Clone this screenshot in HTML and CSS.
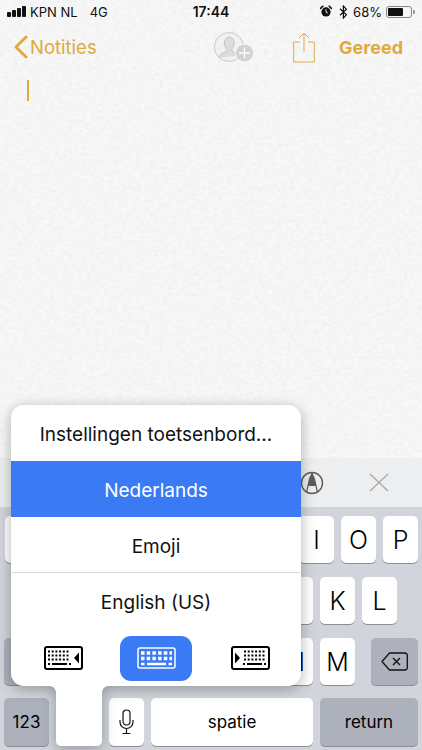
FILE: index.html
```html
<!DOCTYPE html>
<html lang="nl">
<head>
<meta charset="UTF-8" />
<meta name="viewport" content="width=device-width, initial-scale=1" />
<title>Notities</title>
<link rel="stylesheet" href="styles.css">
</head>
<body>

<div class="phone">
  <!-- paper texture behind the note -->
  <svg class="paper" width="422" height="460" aria-hidden="true">
    <filter id="grain" x="0" y="0" width="100%" height="100%">
      <feTurbulence type="fractalNoise" baseFrequency="0.22 0.3" numOctaves="3" seed="4" />
      <feColorMatrix type="matrix" values="0 0 0 0 0.45  0 0 0 0 0.45  0 0 0 0 0.45  0.14 0.14 0 0 -0.1" />
    </filter>
    <rect width="422" height="460" fill="#f8f8f8" />
    <rect width="422" height="460" filter="url(#grain)" />
  </svg>

  <!-- Status bar -->
  <div class="status">
    <div class="status-left">
      <span class="signal"><i></i><i></i><i></i><i></i></span>
      <span>KPN NL</span>
      <span class="net">4G</span>
    </div>
    <div class="status-time">17:44</div>
    <div class="status-right">
      <svg width="12" height="13" viewBox="0 0 13 13">
        <circle cx="6.5" cy="7" r="5" fill="#111" />
        <path d="M6.5 4v3.2l2 1" fill="none" stroke="#f7f7f5" stroke-width="1" />
        <path d="M0.6 3.2 3 0.8M12.4 3.2 10 0.8" stroke="#111" stroke-width="1.8" stroke-linecap="round" />
      </svg>
      <svg class="bt" width="9" height="14" viewBox="0 0 9 14">
        <path d="M1 3.8 7.4 9.8 4.4 13V1l3 3.2L1 10.2" fill="none" stroke="#111" stroke-width="1.2" />
      </svg>
      <span class="pct">68%</span>
      <span class="battery"><span class="battery-fill"></span></span>
      <span class="battery-cap"></span>
    </div>
  </div>

  <!-- Nav bar -->
  <div class="nav">
    <div class="nav-back">
      <svg width="15" height="24" viewBox="0 0 15 24">
        <path d="M13 2 3 12l10 10" fill="none" stroke="#e0aa3c" stroke-width="3" stroke-linecap="round" stroke-linejoin="round" />
      </svg>
      <span>Notities</span>
    </div>
    <div class="nav-tools">
      <svg class="person" width="40" height="32" viewBox="0 0 40 32">
        <circle cx="15" cy="16" r="14.5" fill="#f1f1f0" stroke="#c8c8c8" stroke-width="1" />
        <path d="M5 27c1-5 5-5 7-6.500 1-1 .6-2.500 0-3.500-1.500-2-1.700-4-1.500-6 .4-3 2.500-5 4.800-5s4.400 2 4.800 5c.2 2 0 4-1.600 6-.6 1-1 2.500 0 3.500 2 1.500 4 1.500 6 4" fill="#dcdcdc" stroke="#c4c4c4" stroke-width="1" />
        <circle cx="30.500" cy="22" r="9" fill="#d2d2d2" stroke="#f4f4f2" stroke-width="1" />
        <path d="M30.500 16.500v11M25 22h11" stroke="#fff" stroke-width="1.300" />
      </svg>
      <svg class="share" width="22" height="31" viewBox="0 0 22 31">
        <path d="M7 10H.7v20h20.600V10H15" fill="none" stroke="#dfa951" stroke-width="1" />
        <path d="M11 20V1M6 6l5-5 5 5" fill="none" stroke="#dfa951" stroke-width="1" />
      </svg>
    </div>
    <div class="nav-done">Gereed</div>
  </div>

  <div class="note"><span class="caret"></span></div>

  <!-- Toolbar above keyboard -->
  <div class="toolbar">
    <svg width="24" height="24" viewBox="0 0 24 24">
      <circle cx="12" cy="12" r="10.500" fill="none" stroke="#5c5c5c" stroke-width="1.400" />
      <path d="M6.500 21.500 9.500 8 12 2.500 14.500 8l3 13.500" fill="none" stroke="#5c5c5c" stroke-width="1.200" />
      <path d="M9.500 8 12 2.500 14.500 8l1.500 7H8z" fill="#5c5c5c" />
    </svg>
    <svg class="close" width="20" height="19" viewBox="0 0 20 19">
      <path d="M1 1l18 17M19 1 1 18" stroke="#a9a9a9" stroke-width="1.300" />
    </svg>
  </div>

  <!-- Keyboard, the keys under the popup stay blank -->
  <div class="keyboard">
    <div class="row row-top">
      <span class="key"></span><span class="key"></span><span class="key"></span><span class="key"></span><span class="key"></span><span class="key"></span><span class="key"></span><span class="key">I</span><span class="key">O</span><span class="key">P</span>
    </div>
    <div class="row row-mid">
      <span class="key"></span><span class="key"></span><span class="key"></span><span class="key"></span><span class="key"></span><span class="key"></span><span class="key"></span><span class="key">K</span><span class="key">L</span>
    </div>
    <div class="row">
      <span class="key key-dark key-shift"></span>
      <span class="letters">
        <span class="key"></span><span class="key"></span><span class="key"></span><span class="key"></span><span class="key"></span><span class="key">N</span><span class="key">M</span>
      </span>
      <span class="key key-dark key-del">
        <svg width="27" height="19" viewBox="0 0 27 19">
          <path d="M8.500 1h15.500a2.300 2.300 0 0 1 2.300 2.300v12.400a2.300 2.300 0 0 1-2.300 2.300H8.500L1 9.500z" fill="none" stroke="#111" stroke-width="1.300" stroke-linejoin="round" />
          <path d="M12 6l7 7M19 6l-7 7" stroke="#111" stroke-width="1.400" />
        </svg>
      </span>
    </div>
    <div class="row row-last">
      <span class="key key-dark key-num">123</span>
      <span class="key key-globe"></span>
      <span class="key key-mic">
        <svg width="15" height="26" viewBox="0 0 15 26">
          <rect x="4" y="1" width="7" height="15" rx="3.500" fill="none" stroke="#111" stroke-width="1.200" />
          <path d="M1 11v2a6.500 6.500 0 0 0 13 0v-2M7.500 19.500V24M3.500 24.500h8" fill="none" stroke="#111" stroke-width="1.200" />
        </svg>
      </span>
      <span class="key key-space">spatie</span>
      <span class="key key-dark key-return">return</span>
    </div>
  </div>

  <!-- Language popup, over the keyboard -->
  <div class="popup">
    <div class="popup-item">Instellingen toetsenbord...</div>
    <div class="popup-item popup-active">Nederlands</div>
    <div class="popup-item popup-emoji">Emoji</div>
    <div class="popup-item popup-last">English (US)</div>
    <div class="popup-modes">
      <svg width="39" height="24" viewBox="0 0 39 24">
        <rect x="1" y="1" width="37" height="22" rx="2" fill="none" stroke="#000" stroke-width="2" />
        <path d="M4 5.500h22M4 9.500h22M4 13.500h22" stroke="#000" stroke-width="2" stroke-dasharray="2 1.700" />
        <path d="M8 18h15M4 18h2M25 18h2" stroke="#000" stroke-width="2" />
        <path d="M35 6.500v11l-5-5.500z" fill="#000" />
      </svg>
      <span class="mode-on">
        <svg width="39" height="22" viewBox="0 0 39 22">
          <rect x="1" y="1" width="37" height="20" rx="2" fill="none" stroke="#fff" stroke-width="1.500" />
          <path d="M4 6h31M4 11.500h31" stroke="#fff" stroke-width="3.500" stroke-dasharray="3.500 2.200" />
          <path d="M10 17h19M4 17h3.500M31.500 17H35" stroke="#fff" stroke-width="2.500" />
        </svg>
      </span>
      <svg width="39" height="24" viewBox="0 0 39 24">
        <rect x="1" y="1" width="37" height="22" rx="2" fill="none" stroke="#000" stroke-width="2" />
        <path d="M13 5.500h22M13 9.500h22M13 13.500h22" stroke="#000" stroke-width="2" stroke-dasharray="2 1.700" />
        <path d="M16 18h15M12 18h2M33 18h2" stroke="#000" stroke-width="2" />
        <path d="M4 6.500v11l5-5.500z" fill="#000" />
      </svg>
    </div>
    <div class="popup-tail"></div>
  </div>
</div>

</body>
</html>
```

FILE: styles.css
```css
* {
  box-sizing: border-box;
}

body {
  margin: 0;
  background: #d1d5db;
  font-family: Inter, "Liberation Sans", sans-serif;
  color: #111;
}

.phone {
  position: relative;
  width: 422px;
  height: 750px;
  overflow: hidden;
  display: flex;
  flex-direction: column;
}

.paper {
  position: absolute;
  top: 0;
  left: 0;
}

/* Status bar */
.status {
  position: relative;
  height: 23px;
  padding: 0 7px;
  display: flex;
  align-items: center;
  justify-content: space-between;
  font-size: 13px;
}

.status-left {
  width: 150px;
  display: flex;
  align-items: center;
  gap: 4px;
}

.net {
  margin-left: 8px;
}

.signal {
  display: flex;
  align-items: flex-end;
  gap: 1px;
  height: 11px;
}

.signal i {
  width: 4px;
  background: #111;
  border-radius: 1px;
}
.signal i:nth-child(1) { height: 5px; }
.signal i:nth-child(2) { height: 7px; }
.signal i:nth-child(3) { height: 9px; }
.signal i:nth-child(4) { height: 11px; }

.status-time {
  font-size: 14px;
  font-weight: 600;
}

.status-right {
  width: 150px;
  display: flex;
  align-items: center;
  justify-content: flex-end;
}

.bt {
  margin-left: 7px;
}

.pct {
  margin-left: 5px;
}

.battery {
  margin-left: 4px;
  width: 26px;
  height: 12px;
  border: 1px solid #888;
  border-radius: 3px;
  padding: 1px;
  display: flex;
}

.battery-fill {
  width: 68%;
  background: #111;
  border-radius: 1px;
}

.battery-cap {
  width: 2px;
  height: 4px;
  margin-left: 1px;
  background: #999;
  border-radius: 0 1px 1px 0;
}

/* Nav bar */
.nav {
  position: relative;
  height: 48px;
  padding: 0 19px 0 13px;
  display: flex;
  align-items: center;
  color: #e0aa3c;
  font-size: 18.5px;
}

.nav-back {
  display: flex;
  align-items: center;
  gap: 2px;
}

.nav-tools {
  margin-left: 117px;
  display: flex;
  align-items: center;
  gap: 39px;
}

.nav-done {
  margin-left: auto;
  font-weight: 700;
  font-size: 18px;
}

.note {
  position: relative;
  height: 387px;
  padding: 9px 0 0 27px;
}

.caret {
  display: block;
  width: 2px;
  height: 21px;
  background: #e0aa3c;
}

/* Toolbar */
.toolbar {
  position: relative;
  height: 49px;
  background: #eceef0;
  padding: 0 0 0 300px;
  display: flex;
  align-items: center;
  gap: 45px;
}

/* Keyboard */
.keyboard {
  position: relative;
  flex: 1;
  background: #d1d5db;
  padding: 9px 4px 4px;
  display: flex;
  flex-direction: column;
  gap: 14px;
}

.row {
  height: 47px;
  display: flex;
  gap: 7px;
}

.row-top {
  padding-left: 1px;
}

.row-mid {
  padding-left: 22px;
}

.row-last {
  height: 48px;
  margin-top: -1px;
}

.letters {
  display: flex;
  gap: 7px;
  margin-left: 12px;
}

.key {
  width: 35px;
  background: #fff;
  border-radius: 5px;
  box-shadow: 0 1px 0 #8b8e93;
  display: flex;
  align-items: center;
  justify-content: center;
  font-size: 25px;
  font-weight: 300;
  color: #000;
}

.key-dark {
  background: #acb1bb;
}

.key-shift {
  width: 45px;
}

.key-del {
  width: 47px;
  margin-left: 9px;
}

.key-num {
  width: 45px;
  font-size: 17px;
  font-weight: 400;
}

.key-globe {
  width: 46px;
  visibility: hidden;
}

.key-space {
  width: 162px;
  font-size: 17px;
  font-weight: 400;
}

.key-return {
  width: 98px;
  font-size: 17px;
  font-weight: 400;
}

/* Language popup */
.popup {
  position: absolute;
  left: 11px;
  top: 405px;
  width: 290px;
  height: 281px;
  background: #fff;
  border-radius: 13px;
  filter: drop-shadow(0 3px 7px rgba(0, 0, 0, 0.3));
  display: flex;
  flex-direction: column;
  font-size: 19px;
  color: #111;
}

.popup-item {
  height: 56px;
  padding-top: 2px;
  display: flex;
  align-items: center;
  justify-content: center;
  border-bottom: 1px solid #dcdcdc;
}

.popup-item:first-child {
  border-bottom: none;
}

.popup-active {
  background: #3a7bf5;
  color: #fff;
  border-bottom: none;
}

.popup-emoji {
  padding-top: 3px;
}

.popup-last {
  border-bottom: none;
  height: 57px;
}

.popup-modes {
  flex: 1;
  padding: 0 31px 0 33px;
  display: flex;
  align-items: center;
  justify-content: space-between;
}

.mode-on {
  width: 72px;
  height: 45px;
  margin-left: -2px;
  border-radius: 11px;
  background: #3a7bf5;
  display: flex;
  align-items: center;
  justify-content: center;
}

.popup-tail {
  position: absolute;
  left: 45px;
  top: 275px;
  width: 46px;
  height: 66px;
  background: #fff;
  border-radius: 0 0 5px 5px;
}

/* rounded joins between popup and tail */
.popup-tail::before,
.popup-tail::after {
  content: "";
  position: absolute;
  top: 6px;
  width: 6px;
  height: 6px;
}

.popup-tail::before {
  left: -6px;
  background: radial-gradient(circle at 0 100%, transparent 5.5px, #fff 6px);
}

.popup-tail::after {
  right: -6px;
  background: radial-gradient(circle at 100% 100%, transparent 5.5px, #fff 6px);
}
```
